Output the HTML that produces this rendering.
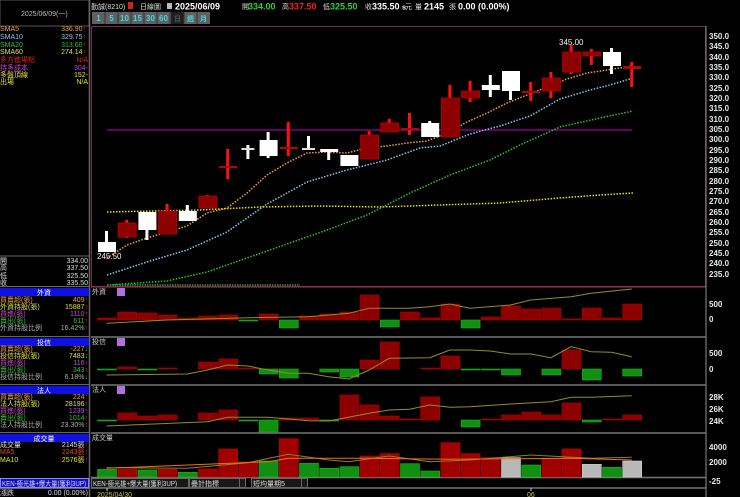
<!DOCTYPE html>
<html><head><meta charset="utf-8"><style>
html,body{margin:0;padding:0;background:#000;width:740px;height:497px;overflow:hidden}
svg{display:block}
text{font-family:"Liberation Sans","Noto Sans CJK TC",sans-serif;font-size:7px}
.b{font-weight:bold;font-size:9px}
.ax{font-weight:bold;font-size:8px;fill:#e8e8e8}
</style></head><body>
<svg id="s" width="740" height="497" viewBox="0 0 740 497" xmlns="http://www.w3.org/2000/svg">
<rect width="740" height="497" fill="#000"/>
<rect x="0" y="0" width="89" height="26" fill="#000" stroke="#555" stroke-width="1"/>
<text x="21" y="16" fill="#bbb">2025/06/09(一)</text>
<line x1="89.5" y1="0" x2="89.5" y2="497" stroke="#666" stroke-width="1.5"/>
<g>
<text x="0" y="31" fill="#e8a040">SMA5</text><text x="86" y="31" fill="#e8a040" text-anchor="end">336.90<tspan fill="#f22">↑</tspan></text>
<text x="0" y="39" fill="#80c8f0">SMA10</text><text x="86" y="39" fill="#80c8f0" text-anchor="end">329.75<tspan fill="#f22">↑</tspan></text>
<text x="0" y="47" fill="#30c030">SMA20</text><text x="86" y="47" fill="#30c030" text-anchor="end">313.60<tspan fill="#f22">↑</tspan></text>
<text x="0" y="54" fill="#e0e040">SMA60</text><text x="86" y="54" fill="#e0e040" text-anchor="end">274.14<tspan fill="#f22">↑</tspan></text>
<text x="0" y="62" fill="#e02020">多方進場點</text><text x="88" y="62" fill="#e02020" text-anchor="end">N/A</text>
<text x="0" y="70" fill="#d040d0">持多成本</text><text x="88" y="70" fill="#d040d0" text-anchor="end">304-</text>
<text x="0" y="77" fill="#e0e040">多盤頂線</text><text x="88" y="77" fill="#e0e040" text-anchor="end">152-</text>
<text x="0" y="84" fill="#e0e040">出場</text><text x="88" y="84" fill="#e0e040" text-anchor="end">N/A</text>
</g>
<line x1="0" y1="256" x2="89" y2="256" stroke="#666"/>
<text x="0" y="263" fill="#ddd">開</text><text x="88" y="263" fill="#ddd" text-anchor="end">334.00</text>
<text x="0" y="270" fill="#ddd">高</text><text x="88" y="270" fill="#ddd" text-anchor="end">337.50</text>
<text x="0" y="278" fill="#ddd">低</text><text x="88" y="278" fill="#ddd" text-anchor="end">325.50</text>
<text x="0" y="285" fill="#ddd">收</text><text x="88" y="285" fill="#ddd" text-anchor="end">335.50</text>
<line x1="0" y1="286.5" x2="89" y2="286.5" stroke="#666"/>
<rect x="0" y="288" width="89" height="8" fill="#1010e0"/><text x="44" y="295" fill="#fff" text-anchor="middle">外資</text>
<text x="0" y="302" fill="#e8a040">買賣超(張)</text><text x="88" y="302" fill="#e8a040" text-anchor="end">409<tspan fill="#f22">↑</tspan></text>
<text x="0" y="309" fill="#e0e040">外資持股(張)</text><text x="88" y="309" fill="#e0e040" text-anchor="end">15887<tspan fill="#f22">↑</tspan></text>
<text x="0" y="316" fill="#d040d0">買進(張)</text><text x="88" y="316" fill="#d040d0" text-anchor="end">1110<tspan fill="#f22">↑</tspan></text>
<text x="0" y="323" fill="#30c030">賣出(張)</text><text x="88" y="323" fill="#30c030" text-anchor="end">611<tspan fill="#f22">↑</tspan></text>
<text x="0" y="330" fill="#aaa">外資持股比例</text><text x="88" y="330" fill="#aaa" text-anchor="end">16.42%<tspan fill="#f22">↑</tspan></text>
<line x1="0" y1="336.5" x2="89" y2="336.5" stroke="#666"/>
<rect x="0" y="338" width="89" height="8" fill="#1010e0"/><text x="44" y="345" fill="#fff" text-anchor="middle">投信</text>
<text x="0" y="351" fill="#e8a040">買賣超(張)</text><text x="88" y="351" fill="#e8a040" text-anchor="end">-227<tspan fill="#2d2">↓</tspan></text>
<text x="0" y="358" fill="#e0e040">投信持股(張)</text><text x="88" y="358" fill="#e0e040" text-anchor="end">7483<tspan fill="#2d2">↓</tspan></text>
<text x="0" y="365" fill="#d040d0">買進(張)</text><text x="88" y="365" fill="#d040d0" text-anchor="end">116<tspan fill="#f22">↑</tspan></text>
<text x="0" y="372" fill="#30c030">賣出(張)</text><text x="88" y="372" fill="#30c030" text-anchor="end">343<tspan fill="#f22">↑</tspan></text>
<text x="0" y="379" fill="#aaa">投信持股比例</text><text x="88" y="379" fill="#aaa" text-anchor="end">6.18%<tspan fill="#2d2">↓</tspan></text>
<line x1="0" y1="384.5" x2="89" y2="384.5" stroke="#666"/>
<rect x="0" y="386" width="89" height="8" fill="#1010e0"/><text x="44" y="393" fill="#fff" text-anchor="middle">法人</text>
<text x="0" y="399" fill="#e8a040">買賣超(張)</text><text x="88" y="399" fill="#e8a040" text-anchor="end">224<tspan fill="#f22">↑</tspan></text>
<text x="0" y="406" fill="#e0e040">法人持股(張)</text><text x="88" y="406" fill="#e0e040" text-anchor="end">28196<tspan fill="#f22">↑</tspan></text>
<text x="0" y="413" fill="#d040d0">買進(張)</text><text x="88" y="413" fill="#d040d0" text-anchor="end">1239<tspan fill="#f22">↑</tspan></text>
<text x="0" y="420" fill="#30c030">賣出(張)</text><text x="88" y="420" fill="#30c030" text-anchor="end">1014<tspan fill="#f22">↑</tspan></text>
<text x="0" y="427" fill="#aaa">法人持股比例</text><text x="88" y="427" fill="#aaa" text-anchor="end">23.30%<tspan fill="#f22">↑</tspan></text>
<line x1="0" y1="432.5" x2="89" y2="432.5" stroke="#666"/>
<rect x="0" y="434" width="89" height="8" fill="#1010e0"/><text x="44" y="441" fill="#fff" text-anchor="middle">成交量</text>
<text x="0" y="447" fill="#ddd">成交量</text><text x="88" y="447" fill="#ddd" text-anchor="end">2145張<tspan fill="#f22">↑</tspan></text>
<text x="0" y="454" fill="#e04040">MA5</text><text x="88" y="454" fill="#e04040" text-anchor="end">2243張<tspan fill="#f22">↑</tspan></text>
<text x="0" y="462" fill="#e0e040">MA10</text><text x="88" y="462" fill="#e0e040" text-anchor="end">2576張<tspan fill="#f22">↑</tspan></text>
<rect x="0.5" y="478.5" width="88" height="9" fill="#1010c0" stroke="#88f"/>
<text x="2" y="486" fill="#ddd" textLength="84" lengthAdjust="spacingAndGlyphs">KEN-極光雄+爆大量(獲利3UP)</text>
<line x1="0" y1="488.5" x2="89" y2="488.5" stroke="#666"/>
<text x="0" y="495" fill="#ddd">漲跌</text><text x="88" y="495" fill="#ddd" text-anchor="end">0.00 (0.00%)</text>

<text x="91" y="9" fill="#ddd">勤誠(8210)</text>
<rect x="128" y="2" width="5" height="7" fill="#d02020"/>
<text x="140" y="9" fill="#ddd">日線圖</text>
<rect x="167" y="3" width="5" height="6" fill="#bbb"/>
<text x="175" y="9.5" class="b" fill="#fff">2025/06/09</text>
<text x="242" y="9" fill="#ddd">開</text><text x="248" y="9.5" class="b" fill="#30d030">334.00</text>
<text x="282" y="9" fill="#ddd">高</text><text x="289" y="9.5" class="b" fill="#f02020">337.50</text>
<text x="323" y="9" fill="#ddd">低</text><text x="330" y="9.5" class="b" fill="#30d030">325.50</text>
<text x="365" y="9" fill="#ddd">收</text><text x="372" y="9.5" class="b" fill="#fff">335.50 <tspan style="font-size:7px">s</tspan></text>
<text x="405" y="9" fill="#ddd">元</text><text x="415" y="9" fill="#ddd">量</text>
<text x="424" y="9.5" class="b" fill="#fff">2145</text><text x="449" y="9" fill="#ddd">張</text>
<text x="458" y="9.5" class="b" fill="#fff">0.00 (0.00%)</text>
<g font-weight="bold">
<rect x="92" y="12" width="118" height="12" fill="#606060"/>
<rect x="171" y="12" width="13" height="12" fill="#202020"/>
<g stroke="#333"><line x1="105" y1="12" x2="105" y2="24"/><line x1="118" y1="12" x2="118" y2="24"/><line x1="131" y1="12" x2="131" y2="24"/><line x1="144" y1="12" x2="144" y2="24"/><line x1="157" y1="12" x2="157" y2="24"/><line x1="170" y1="12" x2="170" y2="24"/><line x1="184" y1="12" x2="184" y2="24"/><line x1="197" y1="12" x2="197" y2="24"/></g>
<text x="98.5" y="21" fill="#40d8e0" text-anchor="middle" style="font-size:8px">1</text>
<text x="111.5" y="21" fill="#40d8e0" text-anchor="middle" style="font-size:8px">5</text>
<text x="124.5" y="21" fill="#40d8e0" text-anchor="middle" style="font-size:8px">10</text>
<text x="137.5" y="21" fill="#40d8e0" text-anchor="middle" style="font-size:8px">15</text>
<text x="150.5" y="21" fill="#40d8e0" text-anchor="middle" style="font-size:8px">30</text>
<text x="163.5" y="21" fill="#40d8e0" text-anchor="middle" style="font-size:8px">60</text>
<text x="177.5" y="21" fill="#555" text-anchor="middle">日</text>
<text x="190.5" y="21" fill="#40d8e0" text-anchor="middle">週</text>
<text x="203.5" y="21" fill="#40d8e0" text-anchor="middle">月</text>
</g>
<rect x="91.5" y="26.5" width="614" height="260" fill="none" stroke="#703048"/>
<line x1="91" y1="287" x2="706" y2="287" stroke="#a03060"/>
<g stroke="#777" stroke-width="1.5">
<line x1="91" y1="337" x2="706" y2="337"/>
<line x1="91" y1="385" x2="706" y2="385"/>
<line x1="91" y1="433" x2="706" y2="433"/>
<line x1="91" y1="477.5" x2="706" y2="477.5"/>
<line x1="91" y1="488" x2="706" y2="488"/>
</g>
<line x1="706" y1="26" x2="706" y2="497" stroke="#777" stroke-width="1.2"/>
<g class="ax">
<text x="709" y="39" class="ax">350.0</text><text x="709" y="49" class="ax">345.0</text><text x="709" y="60" class="ax">340.0</text><text x="709" y="70" class="ax">335.0</text><text x="709" y="80" class="ax">330.0</text><text x="709" y="91" class="ax">325.0</text><text x="709" y="101" class="ax">320.0</text><text x="709" y="111" class="ax">315.0</text><text x="709" y="122" class="ax">310.0</text><text x="709" y="132" class="ax">305.0</text><text x="709" y="142" class="ax">300.0</text><text x="709" y="153" class="ax">295.0</text><text x="709" y="163" class="ax">290.0</text><text x="709" y="173" class="ax">285.0</text><text x="709" y="184" class="ax">280.0</text><text x="709" y="194" class="ax">275.0</text><text x="709" y="204" class="ax">270.0</text><text x="709" y="215" class="ax">265.0</text><text x="709" y="225" class="ax">260.0</text><text x="709" y="235" class="ax">255.0</text><text x="709" y="246" class="ax">250.0</text><text x="709" y="256" class="ax">245.0</text><text x="709" y="266" class="ax">240.0</text><text x="709" y="277" class="ax">235.0</text>
<text x="709" y="307" class="ax">500</text><text x="709" y="322" class="ax">0</text>
<text x="709" y="356" class="ax">500</text><text x="709" y="372" class="ax">0</text>
<text x="709" y="400" class="ax">28K</text><text x="709" y="412" class="ax">26K</text><text x="709" y="424" class="ax">24K</text>
<text x="709" y="450" class="ax">4000</text><text x="709" y="465" class="ax">2000</text><text x="709" y="484" class="ax">-25</text>
</g>
<text x="92" y="294" fill="#ccc">外資</text><rect x="117" y="288" width="8" height="8" fill="#b070e0"/>
<text x="92" y="344" fill="#ccc">投信</text><rect x="117" y="338" width="8" height="8" fill="#b070e0"/>
<text x="92" y="392" fill="#ccc">法人</text><rect x="117" y="386" width="8" height="8" fill="#b070e0"/>
<text x="92" y="440" fill="#ccc">成交量</text>
<g fill="#181818" stroke="#666"><rect x="91.5" y="478.5" width="97" height="9"/><rect x="189.5" y="478.5" width="50" height="9"/><rect x="239.5" y="478.5" width="6" height="9"/><rect x="251.5" y="478.5" width="50" height="9"/><rect x="301.5" y="478.5" width="6" height="9"/></g>
<text x="93" y="486" fill="#ddd" textLength="84" lengthAdjust="spacingAndGlyphs">KEN-極光雄+爆大量(獲利3UP)</text>
<text x="191" y="486" fill="#ddd">疊計指標</text><text x="253" y="486" fill="#ddd">短均量期5</text>
<line x1="107" y1="488" x2="107" y2="491" stroke="#ccc"/><text x="97" y="497" fill="#c8c040">2025/04/30</text>
<line x1="531" y1="488" x2="531" y2="491" stroke="#ccc"/><text x="527" y="497" fill="#c8c040">06</text>
<text x="559" y="45" fill="#eee" style="font-size:8px">345.00</text>
<text x="97" y="259" fill="#eee" style="font-size:8px">245.50</text>
<g id="g"></g>
</svg>
<script>
var NS="http://www.w3.org/2000/svg",g=document.getElementById("g");
function el(t,a){var e=document.createElementNS(NS,t);for(var k in a)e.setAttribute(k,a[k]);g.appendChild(e);return e;}
function cx(i){return 97+i*20.2+9.5;}
function L(i){return 97+i*20.2;}
function line(pts,col,dash,w){var s=pts.map(function(p){return (p[0]<40?cx(p[0]-1):p[0])+","+p[1];}).join(" ");el("polyline",{points:s,fill:"none",stroke:col,"stroke-width":w||1.3,"stroke-dasharray":dash||""});}
line([[107,212],[200,210],[260,207],[320,206],[380,207],[440,205],[500,203],[560,198],[600,195],[633,193]],"#e8e020","1.5 1.5",1.5);
el("line",{x1:107,y1:130,x2:632,y2:130,stroke:"#a000a0","stroke-width":1.2});
line([[107,285],[167,281],[207,272],[247,258],[287,244],[327,230],[367,215],[410,193],[450,175],[490,160],[520,145],[560,127],[600,118],[633,111]],"#30c030","1.5 1.5",1.5);
line([[107,275],[147,262],[187,250],[227,232],[267,204],[307,182],[347,170],[387,160],[420,148],[440,146],[470,134],[500,126],[530,116],[560,99],[590,90],[610,85],[633,78]],"#80c8f0","1.5 1.5",1.5);
line([[107,258],[127,245],[147,238],[167,232],[187,226],[207,213],[227,208],[247,193],[267,175],[287,163],[307,153],[327,152],[347,153],[367,148],[387,146],[407,143],[427,141],[447,133],[467,122],[487,113],[507,103],[527,95],[547,87],[567,79],[587,73],[607,70],[632,66]],"#f0a040","1.5 1.5",1.5);
var C=[[242,252,231,252,'w'],[223,237,220,238,'r'],[212,230,212,240,'w'],[211,234,204,234,'r'],[211,221,205,221,'w'],[196,208,195,208,'r'],[166,168,149,179,'d'],[148,150,145,159,'wd'],[140,156,132,158,'w'],[147,149,122,156,'d'],[148,150,136,149,'wd'],[149,152,149,160,'w'],[155,166,155,166,'w'],[135,159,131,159,'r'],[123,132,119,132,'r'],[128,130,113,135,'d'],[123,137,121,137,'w'],[98,137,85,137,'r'],[91,98,81,102,'r'],[85,90,75,97,'w'],[71,91,71,100,'w'],[91,93,82,101,'d'],[78,91,72,98,'r'],[52,72,45,74,'r'],[52,56,49,65,'r'],[52,66,48,74,'w'],[66,69,62,87,'d']];
C.forEach(function(c,i){var x=L(i),m=cx(i),t=c[4];
 var wc=(t=='w'||t=='wd')?"#fff":"#ff1010";
 el("rect",{x:m-1.5,y:c[2],width:3,height:c[3]-c[2],fill:wc});
 var bc=t=='w'?"#fff":t=='wd'?"#ddd":t=='d'?"#b00808":"#8c0000";
 var bx=t=='wd'?x+3:x+1,bw=t=='wd'?13:18;
 el("rect",{x:bx,y:c[0],width:bw,height:Math.max(2,c[1]-c[0]),fill:bc,stroke:t=='r'?"#c00000":"none","stroke-width":0.8});
});
function bars(base,v){v.forEach(function(h,i){if(h==0)return;el("rect",{x:L(i)+0.5,y:h>0?base-h:base,width:19,height:Math.abs(h),fill:h>0?"#8c0000":"#109010",stroke:h>0?"#b00000":"#20b020","stroke-width":0.6});});}
bars(320,[2,8,7,5,2,4,5,-1,6,-8,4,6,8,25,-7,8,2,16,-8,3,14,11,12,1,12,2,16]);
bars(369,[-1,2,-1,1,0,7,10,1,-5,-9,0,-3,-8,9,27,0,1,13,-1,-1,-6,0,-6,19,-11,0,-7]);
bars(420,[-1,7,4,5,0,7,10,-1,-12,2,2,-1,25,15,4,1,23,0,-7,1,5,8,5,17,-2,1,5]);
var VT=[568,568,570,568,577,567,507,546,543,476,550,565,560,528,521,551,573,488,521,533,533,555,535,507,553,562,543];
var VC="grgrgrrrgrgggrrggrrrqgrrqgq";
VT.forEach(function(z,i){var y=280+z/3,c=VC[i];el("rect",{x:L(i)+0.5,y:y,width:19,height:477-y,fill:c=='g'?"#109010":c=='r'?"#a00000":"#b8b8b8",stroke:c=='g'?"#20b020":c=='r'?"#c00000":"#d0d0d0","stroke-width":0.6});});
line([[1,323.3],[4,320],[8,317.7],[11,316.7],[13,313.3],[14,308.3],[16,308.3],[17,306.7],[18,304],[19,308.3],[21,305],[22,300],[24,296.7],[25,293.3],[27,289]],"#909020","",1);
line([[1,375],[4,374.3],[5,374],[6,370],[7,365],[8,366],[9,370],[10,373.3],[11,373.3],[12,376.7],[13,379],[14,370],[15,358.3],[17,357.7],[18,350],[19,350],[20,351],[21,354],[22,354],[23,357.7],[24,346.7],[25,351.7],[26,352.3],[27,356.7]],"#909020","",1);
line([[1,426],[6,421.7],[7,417.3],[9,417.3],[11,420.7],[12,421],[14,413.3],[15,410],[16,409.3],[17,405],[18,407.3],[19,406.7],[21,404],[23,401.7],[24,397.3],[25,397.3],[27,395.7]],"#909020","",1);
line([[1,467.7],[5,468.3],[8,462.7],[10,454.3],[12,460],[13,461.7],[15,456],[17,461.7],[19,460],[22,455],[25,458.3],[27,457.3]],"#908020","",1);
line([[1,468.3],[9,461.7],[10,458.3],[14,458.3],[18,459.3],[24,458.3],[27,460]],"#f07020","",1);
el("line",{x1:107,y1:285,x2:300,y2:285,stroke:"#30a030","stroke-width":1.5,"stroke-dasharray":"1.5 1"});
</script>
</body></html>
